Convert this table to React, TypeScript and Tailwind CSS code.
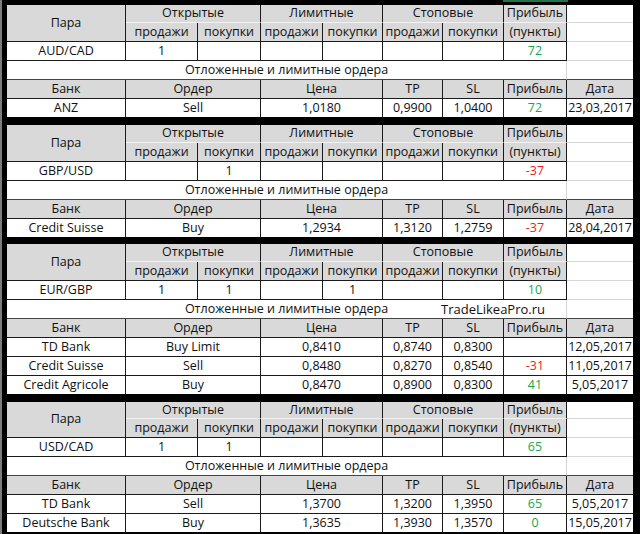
import React from "react";

type Order = {
  bank: string;
  order: string;
  price: string;
  tp: string;
  sl: string;
  profit: string;
  pc: "g" | "r" | "";
  date: string;
};

type BlockProps = {
  pair: string;
  os?: string;
  ob?: string;
  ls?: string;
  lb?: string;
  ss?: string;
  sb?: string;
  profit: string;
  pc: "g" | "r";
  orders: Order[];
  rows: string;
  watermark?: boolean;
  className?: string;
};

const HEAD = "bg-[#d9d9d9]";
const C = "flex items-center justify-center whitespace-nowrap";

function color(pc: string) {
  if (pc === "g") return "text-[#17a650]";
  if (pc === "r") return "text-[#ee1c1c]";
  return "";
}

function Block({ pair, os, ob, ls, lb, ss, sb, profit, pc, orders, rows, watermark, className }: BlockProps) {
  const hdrTop = `${C} ${HEAD} border-r border-b border-r-[#1a1a1a] border-b-[#f2f2f2]`;
  const hdrSub = `${C} ${HEAD} border-r border-b border-r-[#1a1a1a] border-b-[#1a1a1a]`;
  const val = `${C} bg-white border-r border-b border-r-[#1a1a1a] border-b-[#1a1a1a]`;
  const dateEmpty = `bg-white border-b border-b-[#d6d6d6]`;
  return (
    <div
      className={`grid grid-cols-[119px_72px_63px_62px_60px_60px_61px_63px_66px] ${rows} ${className ?? ""}`}
    >
      {/* header row 1 */}
      <div className={`${C} ${HEAD} row-span-2 border-r border-b border-r-[#1a1a1a] border-b-[#1a1a1a]`}>Пара</div>
      <div className={`${hdrTop} col-span-2`}>Открытые</div>
      <div className={`${hdrTop} col-span-2`}>Лимитные</div>
      <div className={`${hdrTop} col-span-2`}>Стоповые</div>
      <div className={hdrTop}>Прибыль</div>
      <div className={dateEmpty} />
      {/* header row 2 */}
      <div className={hdrSub}>продажи</div>
      <div className={hdrSub}>покупки</div>
      <div className={hdrSub}>продажи</div>
      <div className={hdrSub}>покупки</div>
      <div className={hdrSub}>продажи</div>
      <div className={hdrSub}>покупки</div>
      <div className={hdrSub}>(пункты)</div>
      <div className={dateEmpty} />
      {/* pair row */}
      <div className={val}>{pair}</div>
      <div className={val}>{os}</div>
      <div className={val}>{ob}</div>
      <div className={val}>{ls}</div>
      <div className={val}>{lb}</div>
      <div className={val}>{ss}</div>
      <div className={val}>{sb}</div>
      <div className={`${val} ${color(pc)}`}>{profit}</div>
      <div className={dateEmpty} />
      {/* pending title */}
      <div className={`${C} relative col-span-8 bg-white border-r border-b border-r-[#d6d6d6] border-b-[#444]`}>
        Отложенные и лимитные ордера
        {watermark && (
          <span className="absolute left-[434px] top-0 h-full flex items-center text-[13px] text-[#111]">
            TradeLikeaPro.ru
          </span>
        )}
      </div>
      <div className="bg-white border-b border-b-[#444]" />
      {/* orders header */}
      <div className={hdrSub}>Банк</div>
      <div className={`${hdrSub} col-span-2`}>Ордер</div>
      <div className={`${hdrSub} col-span-2`}>Цена</div>
      <div className={hdrSub}>TP</div>
      <div className={hdrSub}>SL</div>
      <div className={hdrSub}>Прибыль</div>
      <div className={`${C} ${HEAD} border-b border-b-[#1a1a1a]`}>Дата</div>
      {orders.map((o, i) => {
        const last = i === orders.length - 1;
        const b = last ? "" : "border-b border-b-[#1a1a1a]";
        const cell = `${C} bg-white border-r border-r-[#1a1a1a] ${b}`;
        return (
          <React.Fragment key={i}>
            <div className={cell}>{o.bank}</div>
            <div className={`${cell} col-span-2`}>{o.order}</div>
            <div className={`${cell} col-span-2`}>{o.price}</div>
            <div className={cell}>{o.tp}</div>
            <div className={cell}>{o.sl}</div>
            <div className={`${cell} ${color(o.pc)}`}>{o.profit}</div>
            <div className={`${C} bg-white ${b}`}>{o.date}</div>
          </React.Fragment>
        );
      })}
    </div>
  );
}

export default function App() {
  return (
    <div className="relative w-[640px] h-[534px] overflow-hidden bg-black flex font-['Open_Sans',sans-serif] font-medium text-[12.5px] leading-none text-[#111]">
      <div className="w-[2px] h-full bg-[#7d7d7d] shrink-0" />
      <div className="flex flex-col pl-[5px] pt-[5px]">
        <Block
          pair="AUD/CAD"
          os="1"
          profit="72"
          pc="g"
          rows="grid-rows-[18px_19px_19px_19px_19px_18px]"
          orders={[
            { bank: "ANZ", order: "Sell", price: "1,0180", tp: "0,9900", sl: "1,0400", profit: "72", pc: "g", date: "23,03,2017" },
          ]}
        />
        <Block
          className="mt-[8px]"
          pair="GBP/USD"
          ob="1"
          profit="-37"
          pc="r"
          rows="grid-rows-[18px_19px_19px_19px_19px_18px]"
          orders={[
            { bank: "Credit Suisse", order: "Buy", price: "1,2934", tp: "1,3120", sl: "1,2759", profit: "-37", pc: "r", date: "28,04,2017" },
          ]}
        />
        <Block
          className="mt-[7px]"
          pair="EUR/GBP"
          os="1"
          ob="1"
          lb="1"
          profit="10"
          pc="g"
          watermark
          rows="grid-rows-[18px_19px_19px_19px_19px_19px_19px_18px]"
          orders={[
            { bank: "TD Bank", order: "Buy Limit", price: "0,8410", tp: "0,8740", sl: "0,8300", profit: "", pc: "", date: "12,05,2017" },
            { bank: "Credit Suisse", order: "Sell", price: "0,8480", tp: "0,8270", sl: "0,8540", profit: "-31", pc: "r", date: "11,05,2017" },
            { bank: "Credit Agricole", order: "Buy", price: "0,8470", tp: "0,8900", sl: "0,8300", profit: "41", pc: "g", date: "5,05,2017" },
          ]}
        />
        <Block
          className="mt-[8px]"
          pair="USD/CAD"
          os="1"
          ob="1"
          profit="65"
          pc="g"
          rows="grid-rows-[17px_19px_19px_19px_19px_19px_18px]"
          orders={[
            { bank: "TD Bank", order: "Sell", price: "1,3700", tp: "1,3200", sl: "1,3950", profit: "65", pc: "g", date: "5,05,2017" },
            { bank: "Deutsche Bank", order: "Buy", price: "1,3635", tp: "1,3930", sl: "1,3570", profit: "0", pc: "g", date: "15,05,2017" },
          ]}
        />
      </div>
      <div className="absolute left-[503px] top-0 w-[65px] h-[2px] bg-[#217346]" />
    </div>
  );
}
